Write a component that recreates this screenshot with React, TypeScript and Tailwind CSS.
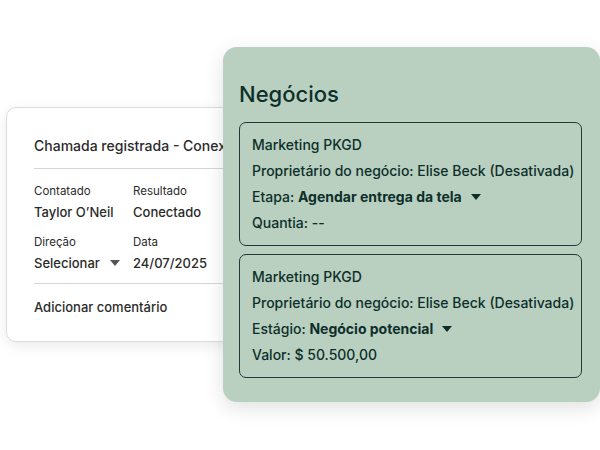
import React from "react";

const font = { fontFamily: "Inter, 'Noto Sans', sans-serif" };

function Caret({ className }: { className: string }) {
  return (
    <svg viewBox="0 0 10 6" className={className} fill="currentColor">
      <path d="M0 0h10L5 6z" />
    </svg>
  );
}

function Field({ label, value }: { label: string; value: string }) {
  return (
    <div>
      <div className="text-[11.5px] leading-[16px]">{label}</div>
      <div className="mt-[3px] text-[13px] leading-[20px] font-medium">{value}</div>
    </div>
  );
}

function CallCard() {
  return (
    <div className="mt-[107px] ml-[6px] w-[290px] h-[235px] shrink-0 rounded-[10px] border border-[#dcdcdc] bg-white shadow-[0_4px_14px_rgba(0,0,0,0.08)] pl-[27px] pt-[27px] text-[#2b2b2b] overflow-hidden">
      <div className="text-[14px] leading-[22px] font-medium whitespace-nowrap">
        Chamada registrada - Conexão estabelecida
      </div>
      <div className="mt-[11px] h-px bg-[#d6d6d6]" />
      <div className="mt-[14px] grid grid-cols-[99px_1fr] gap-y-[12px]">
        <Field label="Contatado" value="Taylor O’Neil" />
        <Field label="Resultado" value="Conectado" />
        <div>
          <div className="text-[11.5px] leading-[16px]">Direção</div>
          <div className="mt-[3px] flex items-center gap-[10px] text-[13px] leading-[20px] font-medium">
            Selecionar
            <Caret className="w-[10px] h-[6px] text-[#555]" />
          </div>
        </div>
        <Field label="Data" value="24/07/2025" />
      </div>
      <div className="mt-[10px] h-px bg-[#d6d6d6]" />
      <div className="mt-[13px] text-[13px] leading-[20px] font-medium">Adicionar comentário</div>
    </div>
  );
}

function Deal({ stageLabel, stage, amount }: { stageLabel: string; stage: string; amount: string }) {
  return (
    <div className="rounded-[7px] border border-[#1e3a36] pl-[12px] pt-[9px] pb-[9px] text-[14px] leading-[26px] font-medium whitespace-nowrap">
      <div>Marketing PKGD</div>
      <div>Proprietário do negócio: Elise Beck (Desativada)</div>
      <div className="flex items-center">
        {stageLabel}:&nbsp;<span className="font-bold">{stage}</span>
        <Caret className="ml-[9px] w-[10px] h-[6px]" />
      </div>
      <div>{amount}</div>
    </div>
  );
}

export default function App() {
  return (
    <div className="w-[600px] h-[450px] bg-white flex overflow-hidden" style={font}>
      <CallCard />
      <div className="relative ml-[-73px] mt-[47px] w-[377px] h-[355px] shrink-0 rounded-[14px] bg-[#b9cfbf] shadow-[0_6px_20px_rgba(0,0,0,0.12)] pl-[16px] pr-[18px] pt-[32px] text-[#0d2f2b]">
        <div className="text-[22px] leading-[30px] font-medium">Negócios</div>
        <div className="mt-[13px] flex flex-col gap-[8px]">
          <Deal stageLabel="Etapa" stage="Agendar entrega da tela" amount="Quantia: --" />
          <Deal stageLabel="Estágio" stage="Negócio potencial" amount="Valor: $ 50.500,00" />
        </div>
      </div>
    </div>
  );
}
